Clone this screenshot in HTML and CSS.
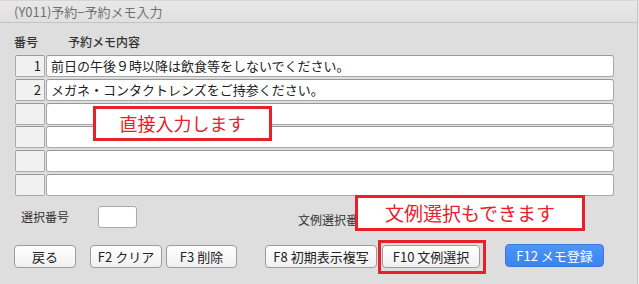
FILE: index.html
```html
<!DOCTYPE html>
<html lang="ja">
<head>
<meta charset="utf-8">
<link rel="stylesheet" href="styles.css">
</head>
<body>
<div class="window">
  <div class="titlebar">(Y011)予約−予約メモ入力</div>
  <div class="panel">
    <div class="head"><span class="h-no">番号</span><span class="h-memo">予約メモ内容</span></div>
    <div class="rows">
      <div class="row"><div class="no">1</div><div class="memo">前日の午後９時以降は飲食等をしないでください。</div></div>
      <div class="row"><div class="no">2</div><div class="memo">メガネ・コンタクトレンズをご持参ください。</div></div>
      <div class="row"><div class="no"></div><div class="memo"></div></div>
      <div class="row"><div class="no"></div><div class="memo"></div></div>
      <div class="row"><div class="no"></div><div class="memo"></div></div>
      <div class="row"><div class="no"></div><div class="memo"></div></div>
    </div>
    <div class="select-row">
      <span class="lbl">選択番号</span>
      <div class="box"></div>
      <span class="lbl lbl2">文例選択番号</span>
      <div class="box"></div>
    </div>
    <div class="buttons">
      <button class="btn b-back">戻る</button>
      <button class="btn b-f2">F2 クリア</button>
      <button class="btn b-f3">F3 削除</button>
      <button class="btn b-f8">F8 初期表示複写</button>
      <button class="btn b-f10">F10 文例選択</button>
      <button class="btn b-f12">F12 メモ登録</button>
    </div>
    <div class="note note1">直接入力します</div>
    <div class="note note2">文例選択もできます</div>
  </div>
</div>
</body>
</html>
```

FILE: styles.css
```css
* { box-sizing: border-box; }
html, body { margin: 0; padding: 0; }
body {
  width: 639px;
  height: 284px;
  overflow: hidden;
  background: #e9e9e9;
  font-family: "Noto Sans CJK JP", "Liberation Sans", sans-serif;
  color: #222;
}
.window {
  width: 638px;
  height: 284px;
  border-right: 1px solid #c6c6c6;
  background: #dedede;
}
.titlebar {
  height: 23px;
  background: linear-gradient(#e8e8e8, #e0e0e0);
  border-bottom: 1px solid #c4c4c4;
  border-top: 1px solid #d6d6d6;
  padding-left: 14px;
  font-size: 13px;
  line-height: 21px;
  color: #707070;
}
.panel {
  position: relative;
  padding: 11px 0 0 15px;
}
.head {
  display: flex;
  height: 16px;
  font-size: 12px;
  line-height: 16px;
  font-weight: 500;
  color: #333;
}
.h-no { margin-left: -1px; width: 54px; }
.rows {
  display: flex;
  flex-direction: column;
  gap: 1.8px;
  margin-top: 5px;
}
.row {
  display: flex;
  gap: 1px;
  height: 22px;
}
.no {
  width: 30px;
  background: #f1f1f1;
  border: 1px solid #a9a9a9;
  border-top-color: #9a9a9a;
  border-radius: 2px;
  text-align: right;
  padding-right: 3px;
  font-size: 13px;
  line-height: 20px;
}
.memo {
  width: 568px;
  background: #fff;
  border: 1px solid #a9a9a9;
  border-top-color: #999;
  border-radius: 3px;
  padding-left: 4px;
  font-size: 13px;
  line-height: 20px;
  color: #222;
}
.select-row {
  display: flex;
  align-items: center;
  margin-top: 10px;
  height: 22px;
}
.lbl {
  font-size: 12px;
  color: #333;
  margin-left: 6px;
  width: 77px;
}
.lbl2 { margin-left: 161px; width: 90px; margin-top: 6px; }
.box {
  width: 39px;
  height: 22px;
  background: #fff;
  border: 1px solid #aaa;
  border-radius: 3px;
}
.buttons {
  display: flex;
  margin-top: 17px;
  height: 23px;
}
.btn {
  height: 23px;
  padding: 0;
  font-family: inherit;
  font-size: 13px;
  line-height: 21px;
  color: #222;
  background: linear-gradient(#ffffff, #f0f0f0);
  border: 1px solid #9c9c9c;
  border-radius: 4px;
  text-align: center;
}
.b-back { width: 62px; margin-left: -1px; }
.b-f2 { width: 72px; margin-left: 14px; }
.b-f3 { width: 71px; margin-left: 4px; }
.b-f8 { width: 112px; margin-left: 28px; }
.b-f10 {
  position: relative;
  width: 98px;
  margin-left: 5px;
}
.b-f10::after {
  content: "";
  position: absolute;
  left: -5px;
  top: -6px;
  right: -7px;
  bottom: -7px;
  border: 3px solid #e8202a;
}
.b-f12 {
  width: 99px;
  margin-left: 25px;
  margin-top: -1px;
  color: #fff;
  background: linear-gradient(#4d95f7, #3b82ef);
  border-color: #3a7ae0;
}
.note {
  position: absolute;
  background: #fff;
  border: 3px solid #e8202a;
  color: #e8202a;
  text-align: center;
  font-size: 18px;
}
.note1 {
  left: 93px;
  top: 83px;
  width: 179px;
  height: 35px;
  line-height: 28px;
}
.note2 {
  left: 355px;
  top: 172px;
  width: 230px;
  height: 36px;
  line-height: 29px;
  font-size: 19px;
}
```
